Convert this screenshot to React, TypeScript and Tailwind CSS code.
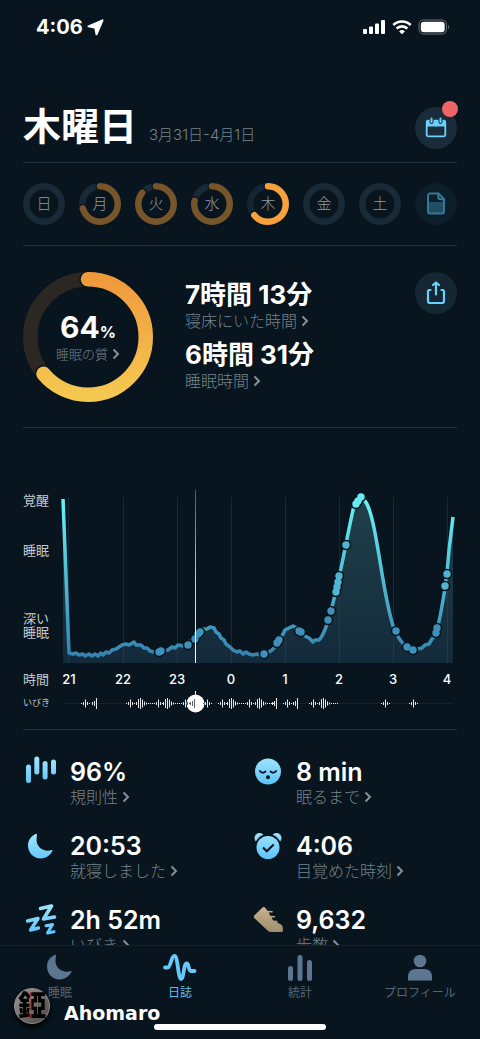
import { ReactNode } from "react";

const BG = "#08151e";

type Day = { name: string; score: number; active?: boolean };

const DAYS: Day[] = [
  { name: "日", score: 0 },
  { name: "月", score: 71 },
  { name: "火", score: 86 },
  { name: "水", score: 78 },
  { name: "木", score: 64, active: true },
  { name: "金", score: 0 },
  { name: "土", score: 0 },
];

const HOURS = ["21", "22", "23", "0", "1", "2", "3", "4"];

// x offsets of the hour lines inside the 390 wide chart
const HOUR_X = [5, 60, 114, 168, 222, 276, 330, 384];

// depth curve over the night, top is awake and bottom is deep sleep
const CURVE =
  "M0 9 L6 163 L10 164 L13 163 L16 165 L20 164 L22 166 L26 164 L29 166 L32 164 L35 166 L38 163 L40 165 L43 162 L46 163 L49 160 L53 159 L56 157 L59 155 L63 154 L66 155 L71 152 L73 155 L78 155 L81 158 L84 158 L87 161 L91 162 L97 162 L105 160 L109 157 L112 158 L115 155 L120 156 L124 153 L132 148 L137 143 L140 139 L144 139 L147 137 L151 138 L153 142 L156 144 L158 148 L161 150 L163 154 L167 157 L170 160 L174 162 L177 161 L180 164 L183 162 L186 164 L190 165 L194 164 L197 165 L200 164 L206 162 L209 160 L213 156 L217 149 L220 144 L222 140 L226 138 L230 136 L234 138 L238 142 L242 146 L246 148 L250 152 L252 150 L256 150 C261 145 265 132 268 120 C277 90 285 40 291 16 C294 7 299 5 302 11 C314 25 320 115 332 141 C337 151 343 158 348 160 C352 159 356 159 359 158 L362 155 L366 154 L369 149 L373 145 C379 120 384 90 386 60 L390 27";

const MARKERS: [number, number][] = [
  [96, 162], [98, 161], [125, 155], [132, 149], [135, 144], [137, 142],
  [201, 164], [214, 153], [216, 150], [236, 141], [238, 142],
  [265, 130], [268, 121], [273, 102], [274, 97], [275, 92], [276, 86],
  [283, 55], [293, 14], [295, 11], [298, 7],
  [333, 141], [344, 157], [350, 160],
  [373, 143], [374, 138], [382, 96], [384, 84],
];

// snore bursts as [dx, height] bars
const SOFT = [[-4, 1], [-2, 3], [0, 8], [2, 3], [4, 1]];
const LOUD = [[-4, 3], [-2, 9], [0, 11], [2, 8], [4, 4], [6, 2]];
const RISE = [[-4, 3], [-2, 5], [0, 11]];
const TAIL = [[1, 1], [3, 1], [5, 1], [7, 1]];

const SNORES: [number, number[][]][] = [
  [22, SOFT], [33, RISE], [67, SOFT], [77, LOUD], [84, TAIL], [95, SOFT],
  [104, LOUD], [111, TAIL], [122, SOFT], [144, SOFT], [159, SOFT],
  [168, LOUD], [175, TAIL], [186, SOFT], [196, LOUD], [203, TAIL],
  [213, RISE], [224, SOFT], [234, RISE], [250, SOFT], [260, LOUD],
  [267, TAIL], [322, SOFT], [350, SOFT],
];

function Chevron() {
  return (
    <svg viewBox="0 0 8 12" className="h-3 w-2 shrink-0" fill="none" aria-hidden="true">
      <path d="M1.500 1.500 6 6l-4.500 4.500" stroke="#82909b" strokeWidth="2" />
    </svg>
  );
}

function Ring({
  size,
  width,
  score,
  track,
  color,
  children,
}: {
  size: number;
  width: number;
  score: number;
  track: string;
  color: string;
  children?: ReactNode;
}) {
  const c = size / 2;
  const r = c - width / 2;
  const arc = {
    cx: c,
    cy: c,
    r,
    fill: "none",
    pathLength: 100,
    strokeDasharray: `${score} 100`,
    strokeLinecap: "round" as const,
    transform: `rotate(-90 ${c} ${c})`,
  };
  return (
    <svg viewBox={`0 0 ${size} ${size}`} className="h-full w-full" aria-hidden="true">
      {children}
      <circle cx={c} cy={c} r={r} fill="none" stroke={track} strokeWidth={width} />
      {score > 0 && (
        <>
          <circle {...arc} stroke={BG} strokeWidth={width + 3} />
          <circle {...arc} stroke={color} strokeWidth={width} />
        </>
      )}
    </svg>
  );
}

function StatusBar() {
  return (
    <div className="flex h-[54px] shrink-0 items-center justify-between pl-9 pr-[30px] text-white">
      <div className="flex items-center gap-1">
        <span className="text-xl leading-6 font-bold">4:06</span>
        <svg viewBox="0 0 17 17" className="h-[17px] w-[17px]" aria-hidden="true">
          <path d="M1.500 7.300 15.500 1.300 9.500 15.300 8.300 8.700z" fill="white" stroke="white" strokeWidth="2" strokeLinejoin="round" />
        </svg>
      </div>
      <div className="flex items-center gap-1.5">
        <svg viewBox="0 0 24 16" className="h-4 w-6" fill="white" aria-hidden="true">
          <rect x="1" y="10" width="4" height="5" rx="1" />
          <rect x="7" y="7.500" width="4" height="7.500" rx="1" />
          <rect x="13" y="4.500" width="4" height="10.500" rx="1" />
          <rect x="19" y="1" width="4" height="14" rx="1" />
        </svg>
        <svg viewBox="0 0 20 16" className="h-4 w-5" fill="none" stroke="white" strokeWidth="2.600" aria-hidden="true">
          <path d="M1.300 6a12.500 12.500 0 0 1 17.400 0" />
          <path d="M4.600 9.500a7.800 7.800 0 0 1 10.800 0" />
          <path d="M10 15.300 7.100 12.400a4.200 4.200 0 0 1 5.800 0z" fill="white" stroke="none" />
        </svg>
        <svg viewBox="0 0 32 16" className="h-4 w-8" fill="none" aria-hidden="true">
          <rect x="1" y="1" width="27.500" height="14" rx="4.500" stroke="#67727b" />
          <rect x="2.800" y="2.800" width="23.900" height="10.400" rx="3" fill="white" />
          <path d="M30 6v4c1.500-.7 1.500-3.300 0-4z" fill="#67727b" />
        </svg>
      </div>
    </div>
  );
}

function CalendarIcon() {
  return (
    <svg viewBox="0 0 22 22" className="h-[22px] w-[22px]" fill="none" aria-hidden="true">
      <rect x="1.700" y="3.700" width="18.600" height="15.600" rx="1.500" stroke="#6bd0fb" strokeWidth="1.800" />
      <path d="M1.500 4h19v5.500h-19z" fill="#6bd0fb" />
      <path d="M6.500 1.800v3.200M15.500 1.800v3.200" stroke="#1a2b39" strokeWidth="4" strokeLinecap="round" />
      <path d="M6.500 1.500v3.500M15.500 1.500v3.500" stroke="#6bd0fb" strokeWidth="2" strokeLinecap="round" />
    </svg>
  );
}

function NoteIcon() {
  return (
    <svg viewBox="0 0 20 24" className="h-6 w-5" fill="none" aria-hidden="true">
      <path d="M2 10h16v9.500a2 2 0 0 1-2 2H4a2 2 0 0 1-2-2z" fill="#214d65" />
      <path
        d="M4 1.500h8.500l5.500 5.500v12.500a2 2 0 0 1-2 2H4a2 2 0 0 1-2-2v-16a2 2 0 0 1 2-2zM12.300 2v3.200a2 2 0 0 0 2 2h3.200"
        stroke="#37789a"
        strokeWidth="2"
      />
    </svg>
  );
}

function ShareIcon() {
  return (
    <svg viewBox="0 0 22 26" className="h-[26px] w-[22px]" fill="none" stroke="#6bd0fb" strokeWidth="2.200" strokeLinecap="round" strokeLinejoin="round" aria-hidden="true">
      <path d="M5.500 10H4.500a1.500 1.500 0 0 0-1.500 1.500v9.500a2 2 0 0 0 2 2h12a2 2 0 0 0 2-2v-9.500a1.500 1.500 0 0 0-1.500-1.500H16.500" />
      <path d="M11 14.500V3M8 5l3-2.500L14 5" />
    </svg>
  );
}

function Divider() {
  return <div className="h-px bg-[#213340]" />;
}

function Week() {
  return (
    <div className="flex items-center justify-between py-5">
      {DAYS.map((day) => (
        <button key={day.name} type="button" className="relative h-[42px] w-[42px]">
          <Ring
            size={42}
            width={6.5}
            score={day.score}
            track={day.active ? "#132432" : "#182a38"}
            color={day.active ? "#f7a13d" : "#76552a"}
          />
          <span className="absolute inset-0 flex items-center justify-center text-[15px] font-light text-[#8e9ba5]">
            {day.name}
          </span>
        </button>
      ))}
      <button type="button" aria-label="ノート" className="flex h-[42px] w-[42px] items-center justify-center rounded-full bg-[#0c1e29]">
        <NoteIcon />
      </button>
    </div>
  );
}

function Duration({ value, label }: { value: string; label: string }) {
  return (
    <a href="#" className="block">
      <span className="block text-[26px] leading-8 font-bold text-white">{value}</span>
      <span className="flex items-center gap-1 text-base leading-5 font-light text-[#74828d]">
        {label}
        <Chevron />
      </span>
    </a>
  );
}

function Summary() {
  return (
    <div className="flex items-start pt-[26px] pb-[25px]">
      <a href="#" className="relative h-[130px] w-[130px] shrink-0">
        <Ring size={130} width={14.5} score={64} track="#2b2723" color="url(#score)">
          {/* the arc is rotated, so its x axis runs up the page */}
          <defs>
            <linearGradient id="score" x1="0" y1="0" x2="1" y2="0">
              <stop offset="0" stopColor="#f5c850" />
              <stop offset="1" stopColor="#f09a3c" />
            </linearGradient>
          </defs>
        </Ring>
        <span className="absolute inset-0 flex flex-col items-center justify-center pt-1">
          <span className="text-[30px] leading-6 font-bold text-white">
            64<span className="text-base">%</span>
          </span>
          <span className="flex items-center gap-1 text-[13px] leading-5 font-light text-[#74828d]">
            睡眠の質
            <Chevron />
          </span>
        </span>
      </a>
      <div className="ml-8 flex flex-1 flex-col gap-2 pt-[7px]">
        <Duration value="7時間 13分" label="寝床にいた時間" />
        <Duration value="6時間 31分" label="睡眠時間" />
      </div>
      <button type="button" aria-label="共有" className="flex h-[42px] w-[42px] items-center justify-center rounded-full bg-[#142733]">
        <ShareIcon />
      </button>
    </div>
  );
}

function SleepChart() {
  return (
    <div className="grid grid-cols-[40px_1fr] pt-[62px] pr-1 pb-3.5">
      <div className="flex flex-col pt-[3px] text-[13px] leading-[14px] text-[#c3cacf]">
        <span>覚醒</span>
        <span className="mt-9">睡眠</span>
        <span className="mt-[54px] w-7">深い睡眠</span>
      </div>
      <svg viewBox="0 0 390 173" className="w-full overflow-visible" fill="none" aria-label="睡眠グラフ">
        <defs>
          <linearGradient id="line" gradientUnits="userSpaceOnUse" x1="0" y1="5" x2="0" y2="165">
            <stop offset="0" stopColor="#6af5f8" />
            <stop offset="0.400" stopColor="#55c9dc" />
            <stop offset="1" stopColor="#3883b0" />
          </linearGradient>
          <linearGradient id="area" gradientUnits="userSpaceOnUse" x1="0" y1="5" x2="0" y2="173">
            <stop offset="0" stopColor="#20414b" />
            <stop offset="1" stopColor="#132a3a" />
          </linearGradient>
          <linearGradient id="playhead" gradientUnits="userSpaceOnUse" x1="0" y1="0" x2="0" y2="173">
            <stop offset="0" stopColor="#4b565e" />
            <stop offset="0.500" stopColor="#c5cacd" />
            <stop offset="1" stopColor="#fff" />
          </linearGradient>
        </defs>
        <path d={`${CURVE} V173 H0 Z`} fill="url(#area)" />
        {HOUR_X.map((x) => (
          <path key={x} d={`M${x + 0.5} 7V173`} stroke="#2c5568" strokeOpacity="0.350" />
        ))}
        <path d={CURVE} stroke="url(#line)" strokeWidth="3.500" strokeLinejoin="round" />
        {MARKERS.map(([x, y]) => (
          <circle key={`b${x}-${y}`} cx={x} cy={y} r="5.300" fill={BG} />
        ))}
        {MARKERS.map(([x, y]) => (
          <circle key={`m${x}-${y}`} cx={x} cy={y} r="3.700" fill={y < 30 ? "#66ecf2" : y < 110 ? "#50b5d2" : "#3f90ba"} />
        ))}
        <rect x="132" y="0" width="1" height="173" fill="url(#playhead)" />
      </svg>

      <span className="mt-1.5 text-[13px] leading-5 text-[#c3cacf]">時間</span>
      <div className="-mx-1 mt-1.5 flex justify-between text-[13px] leading-5 font-medium text-white">
        {HOURS.map((h) => (
          <span key={h} className="w-5 text-center">{h}</span>
        ))}
      </div>

      <span className="mt-0.5 text-[9px] leading-6 text-[#c3cacf]">いびき</span>
      <svg viewBox="0 0 390 24" className="mt-0.5 w-full" fill="none" aria-label="いびき">
        <path d="M0 12.500H390" stroke="#12232e" />
        <circle cx="132.500" cy="12.500" r="9" fill="white" />
        <path d="M132.500 0V6" stroke="white" />
        {SNORES.map(([x, bars]) =>
          bars.map(([dx, h]) => (
            <rect
              key={x + dx}
              x={x + dx}
              y={12.5 - h / 2}
              width="1"
              height={h}
              fill={Math.abs(x + dx - 132) < 9 ? "#56616a" : "#e6e9eb"}
            />
          )),
        )}
        <path d="M127.500 11v3M129.500 10v5M131.500 8v9" stroke="#56616a" />
      </svg>
    </div>
  );
}

function BlueGradient({ id }: { id: string }) {
  return (
    <defs>
      <linearGradient id={id} gradientUnits="userSpaceOnUse" x1="0" y1="2" x2="0" y2="28">
        <stop offset="0" stopColor="#9fe4fb" />
        <stop offset="1" stopColor="#5fc5fb" />
      </linearGradient>
    </defs>
  );
}

const MOON =
  "M9 .8C4 3 1 7.300 1 12.500C1 19.700 6.500 25.500 13.700 25.500C19 25.500 23.500 22.300 25.600 17.600C25.800 17 25.400 16.800 24.900 17C17 19.500 9.600 14.500 9.500 7C9.500 5 9.800 3.200 10 1.500C10 .9 9.600.6 9 .8z";

const STAT_ICONS: Record<string, ReactNode> = {
  bars: (
    <>
      <BlueGradient id="g-bars" />
      <g fill="url(#g-bars)">
        <rect x="0" y="8.500" width="5" height="18.500" rx="2.500" />
        <rect x="8.300" y="0.500" width="5" height="18" rx="2.500" />
        <rect x="16.600" y="5" width="5" height="18.500" rx="2.500" />
        <rect x="25" y="3.500" width="5" height="15" rx="2.500" />
      </g>
    </>
  ),
  moon: (
    <>
      <BlueGradient id="g-moon" />
      <path d={MOON} transform="translate(1 3)" fill="url(#g-moon)" />
    </>
  ),
  zzz: (
    <>
      <BlueGradient id="g-zzz" />
      <g stroke="url(#g-zzz)" strokeLinecap="round" strokeLinejoin="round" fill="none">
        <path d="M14.500 4.500 25.500 2 17.500 15l11-2" strokeWidth="3.600" />
        <path d="M1.500 17 12 14.500 4.500 26l8-2" strokeWidth="3.400" />
        <path d="M20 21.800l6.500-1.300L21.500 29l6.500-1.300" strokeWidth="3" />
      </g>
    </>
  ),
  face: (
    <>
      <BlueGradient id="g-face" />
      <circle cx="16" cy="15.500" r="13" fill="url(#g-face)" />
      <path d="M7.800 15q2.700 3.200 5.700.5M18.500 15.500q3 2.700 5.700-.5" stroke={BG} strokeWidth="1.800" strokeLinecap="round" fill="none" />
      <circle cx="16" cy="21.300" r="2" fill={BG} />
    </>
  ),
  alarm: (
    <>
      <BlueGradient id="g-alarm" />
      <circle cx="7.500" cy="8" r="5" fill="url(#g-alarm)" />
      <circle cx="24.500" cy="8" r="5" fill="url(#g-alarm)" />
      <circle cx="16" cy="17.500" r="13.500" fill={BG} />
      <circle cx="16" cy="17.500" r="11.500" fill="url(#g-alarm)" />
      <path d="m11 17.500 3.700 3.700 7-6.700" stroke={BG} strokeWidth="2.200" fill="none" />
    </>
  ),
  shoe: (
    <>
      <defs>
        <linearGradient id="g-shoe" x1="0" y1="0" x2="0" y2="1">
          <stop offset="0" stopColor="#c9b28d" />
          <stop offset="1" stopColor="#9f8d6d" />
        </linearGradient>
      </defs>
      <path
        d="M9.500 3.500c.8-.8 1.800-.8 2.500 0l2.500 3.200 4.500.3c1 .2 1 1.500 0 1.500h-3.300l1.600 3.200 4.200.3c1 .2 1 1.500 0 1.500h-3l1.700 3 3.500.2c1 .2 1 1.400.2 1.500 2 1.700 5.800 1.500 6 6v2.300c0 1-.7 1.500-1.500 1.500H18c-1.800 0-3-.7-4-2L1.500 14.300c-.9-1-.9-2 0-3z"
        fill="url(#g-shoe)"
        transform="translate(1 0)"
      />
    </>
  ),
};

const STATS = [
  { icon: "bars", value: "96%", label: "規則性" },
  { icon: "face", value: "8 min", label: "眠るまで" },
  { icon: "moon", value: "20:53", label: "就寝しました" },
  { icon: "alarm", value: "4:06", label: "目覚めた時刻" },
  { icon: "zzz", value: "2h 52m", label: "いびき" },
  { icon: "shoe", value: "9,632", label: "歩数" },
];

function Stats() {
  return (
    <div className="grid grid-cols-2 gap-x-[18px] gap-y-6 pt-7">
      {STATS.map((s) => (
        <a key={s.label} href="#" className="flex items-start gap-3.5 pl-[3px]">
          <svg viewBox="0 0 30 30" className="-mt-0.5 h-[30px] w-[30px] shrink-0 overflow-visible" aria-hidden="true">
            {STAT_ICONS[s.icon]}
          </svg>
          <span>
            <span className="block text-[25px] leading-7 font-semibold text-white">{s.value}</span>
            <span className="flex items-center gap-1 text-base leading-[22px] font-light text-[#74828d]">
              {s.label}
              <Chevron />
            </span>
          </span>
        </a>
      ))}
    </div>
  );
}

const TABS = [
  {
    label: "睡眠",
    icon: <path d={MOON} fill="#5d7690" />,
  },
  {
    label: "日誌",
    active: true,
    icon: (
      <path
        d="M-1 13.500H1.500C5 13.500 5 2 8.500 2S12 25 15 25 17.500 9.500 20.500 9.500 22 17 25 17H28.500"
        stroke="#63cafb"
        strokeWidth="3.800"
        strokeLinecap="round"
        strokeLinejoin="round"
        fill="none"
      />
    ),
  },
  {
    label: "統計",
    icon: (
      <g fill="#5d7690">
        <rect x="2" y="12" width="5" height="15" rx="2.500" />
        <rect x="11.500" y="1" width="5" height="26" rx="2.500" />
        <rect x="21" y="6" width="5" height="21" rx="2.500" />
      </g>
    ),
  },
  {
    label: "プロフィール",
    icon: (
      <g fill="#5d7690">
        <circle cx="14" cy="7" r="6.300" />
        <path d="M2 26.500V23q0-8 8-8h8q8 0 8 8v3.500z" />
      </g>
    ),
  },
];

function TabBar() {
  return (
    <nav className="relative flex h-[94px] shrink-0 items-start border-t border-[#15252f] pt-2">
      {TABS.map((tab) => (
        <button key={tab.label} type="button" className="flex flex-1 flex-col items-center gap-[3px]">
          <svg viewBox="0 0 28 28" className="h-7 w-7 overflow-visible" aria-hidden="true">
            {tab.icon}
          </svg>
          <span className={tab.active ? "text-xs leading-4 text-[#5cbbe8]" : "text-xs leading-4 text-[#566675]"}>
            {tab.label}
          </span>
        </button>
      ))}
      <div className="absolute bottom-[9px] left-1/2 h-1.5 w-[172px] -translate-x-1/2 rounded-full bg-white" />
      <div className="absolute bottom-3.5 left-3.5 flex items-center gap-3.5">
        <span className="flex h-9 w-9 items-center justify-center rounded-full border border-[#8d8d8d] bg-linear-to-br from-[#a09c9a] to-[#4a4443] shadow-md shadow-black">
          <span className="bg-linear-to-r from-black from-35% via-[#a32a2e] via-45% to-black to-55% bg-clip-text text-[28px] leading-9 font-black text-transparent">
            錏
          </span>
        </span>
        <span className="pt-3.5 font-['DejaVu_Sans'] text-[19px] leading-6 font-bold text-white">Ahomaro</span>
      </div>
    </nav>
  );
}

export default function App() {
  return (
    <div className="flex h-screen flex-col overflow-hidden bg-[#08151e] font-['Inter','Noto_Sans_CJK_JP',sans-serif]">
      <StatusBar />
      <main className="min-h-0 flex-1 overflow-hidden px-[23px]">
        <header className="flex items-center justify-between pt-[53px] pb-[13px]">
          <div className="flex items-baseline gap-3 pb-1">
            <h1 className="text-[38px] leading-[38px] font-bold text-white">木曜日</h1>
            <span className="text-[15px] leading-5 font-light text-[#74828d]">3月31日-4月1日</span>
          </div>
          <button type="button" aria-label="カレンダー" className="relative flex h-[42px] w-[42px] items-center justify-center rounded-full bg-[#1a2b39]">
            <CalendarIcon />
            <span className="absolute -top-1.5 -right-px h-4 w-4 rounded-full bg-[#ee6569]" />
          </button>
        </header>
        <Divider />
        <Week />
        <Divider />
        <Summary />
        <Divider />
        <SleepChart />
        <Divider />
        <Stats />
      </main>
      <TabBar />
    </div>
  );
}
